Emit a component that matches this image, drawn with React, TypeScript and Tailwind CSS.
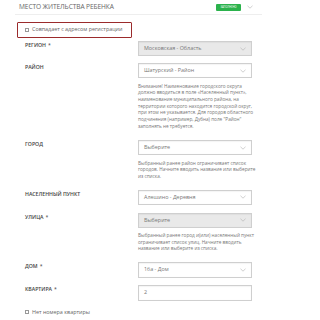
const HINT_DISTRICT = [
  "Внимание! Наименование городского округа",
  "должно вводиться в поле «Населенный пункт»,",
  "наименование муниципального района, на",
  "территории которого находится городской округ,",
  "при этом не указывается. Для городов областного",
  "подчинения (например, Дубна) поле \"Район\"",
  "заполнять не требуется.",
];

const HINT_CITY = [
  "Выбранный ранее район ограничивает список",
  "городов. Начните вводить название или выберите",
  "из списка.",
];

const HINT_STREET = [
  "Выбранный ранее город и(или) населенный пункт",
  "ограничивает список улиц. Начните вводить",
  "название или выберите из списка.",
];

function Chevron({ className = "" }: { className?: string }) {
  return (
    <svg width="6" height="4" viewBox="0 0 6 4" className={className}>
      <path d="M0.5 0.8 L3 3.2 L5.5 0.8" fill="none" stroke="#b0b0b0" strokeWidth="0.6" />
    </svg>
  );
}

function Checkbox() {
  return <span className="block w-[4px] h-[4px] border-[0.6px] border-[#999] bg-white shrink-0" />;
}

function Label({ text, required }: { text: string; required?: boolean }) {
  return (
    <div className="w-[113px] shrink-0 pt-[1px] text-[5.2px] leading-[7px] font-semibold text-[#444] uppercase whitespace-nowrap">
      {text}
      {required && <span className="ml-[2px] font-normal">*</span>}
    </div>
  );
}

function Select({
  value,
  disabled,
  h = "h-[15px]",
  arrow = true,
}: {
  value: string;
  disabled?: boolean;
  h?: string;
  arrow?: boolean;
}) {
  return (
    <div
      className={`w-[114px] ${h} flex items-center pl-[5px] pr-[5px] border-[0.7px] border-[#cfcfcf] shadow-[inset_0_0.5px_1px_rgba(0,0,0,0.08)] ${
        disabled ? "bg-[#e9e9e9]" : "bg-white"
      }`}
    >
      <span className="text-[5.4px] leading-none text-[#777] whitespace-nowrap">{value}</span>
      {arrow && <Chevron className="ml-auto" />}
    </div>
  );
}

function Hint({ lines, lh }: { lines: string[]; lh: string }) {
  return (
    <div className="flex">
      <div className="w-[113px] shrink-0" />
      <div className={`text-[4.7px] ${lh} text-[#777]`}>
        {lines.map((l) => (
          <div key={l} className="whitespace-nowrap">
            {l}
          </div>
        ))}
      </div>
    </div>
  );
}

export default function App() {
  return (
    <div
      className="w-[277px] h-[320px] bg-white overflow-hidden"
      style={{ fontFamily: '"Open Sans", "Liberation Sans", sans-serif' }}
    >
      {/* Header */}
      <div className="mx-[15px] h-[15px] flex items-center border-b-[0.6px] border-[#eeeeee]">
        <span className="pl-[4px] text-[6.6px] leading-none text-[#666] whitespace-nowrap tracking-[-0.1px]">
          МЕСТО ЖИТЕЛЬСТВА РЕБЕНКА
        </span>
        <span className="ml-auto w-[25px] h-[7px] rounded-[1px] bg-[#2bb24c] flex items-center justify-center text-[2.6px] leading-none text-white">
          ЗАПОЛНЕНО
        </span>
        <Chevron className="ml-[6px] mr-[9px]" />
      </div>

      {/* Same as registration */}
      <div className="mt-[7px] ml-[17px] w-[115px] h-[16px] border-[1.4px] border-[#9b2b2c] rounded-[1px] flex items-center gap-[3px] pl-[7px]">
        <Checkbox />
        <span className="text-[5.4px] leading-none text-[#666] whitespace-nowrap">Совпадает с адресом регистрации</span>
      </div>

      <div className="pl-[25px] flex flex-col">
        <div className="flex mt-[3px]">
          <Label text="Регион" required />
          <Select value="Московская - Область" disabled />
        </div>

        <div className="flex mt-[7px]">
          <Label text="Район" />
          <Select value="Шатурский - Район" />
        </div>

        <div className="mt-[4.5px]">
          <Hint lines={HINT_DISTRICT} lh="leading-[6.67px]" />
        </div>

        <div className="flex mt-[11px]">
          <Label text="Город" />
          <Select value="Выберите" />
        </div>

        <div className="mt-[4.5px]">
          <Hint lines={HINT_CITY} lh="leading-[6.4px]" />
        </div>

        <div className="flex mt-[11px]">
          <Label text="Населенный пункт" />
          <Select value="Алешино - Деревня" />
        </div>

        <div className="flex mt-[8px]">
          <Label text="Улица" required />
          <Select value="Выберите" disabled />
        </div>

        <div className="mt-[4px]">
          <Hint lines={HINT_STREET} lh="leading-[6.67px]" />
        </div>

        <div className="flex mt-[10px]">
          <Label text="Дом" required />
          <Select value="16а - Дом" h="h-[16px]" />
        </div>

        <div className="flex mt-[7px]">
          <Label text="Квартира" required />
          <Select value="2" h="h-[16px]" arrow={false} />
        </div>

        <div className="flex items-center gap-[3px] mt-[8px] h-[7px]">
          <Checkbox />
          <span className="text-[5.4px] leading-none text-[#666] whitespace-nowrap">Нет номера квартиры</span>
        </div>
      </div>
    </div>
  );
}
